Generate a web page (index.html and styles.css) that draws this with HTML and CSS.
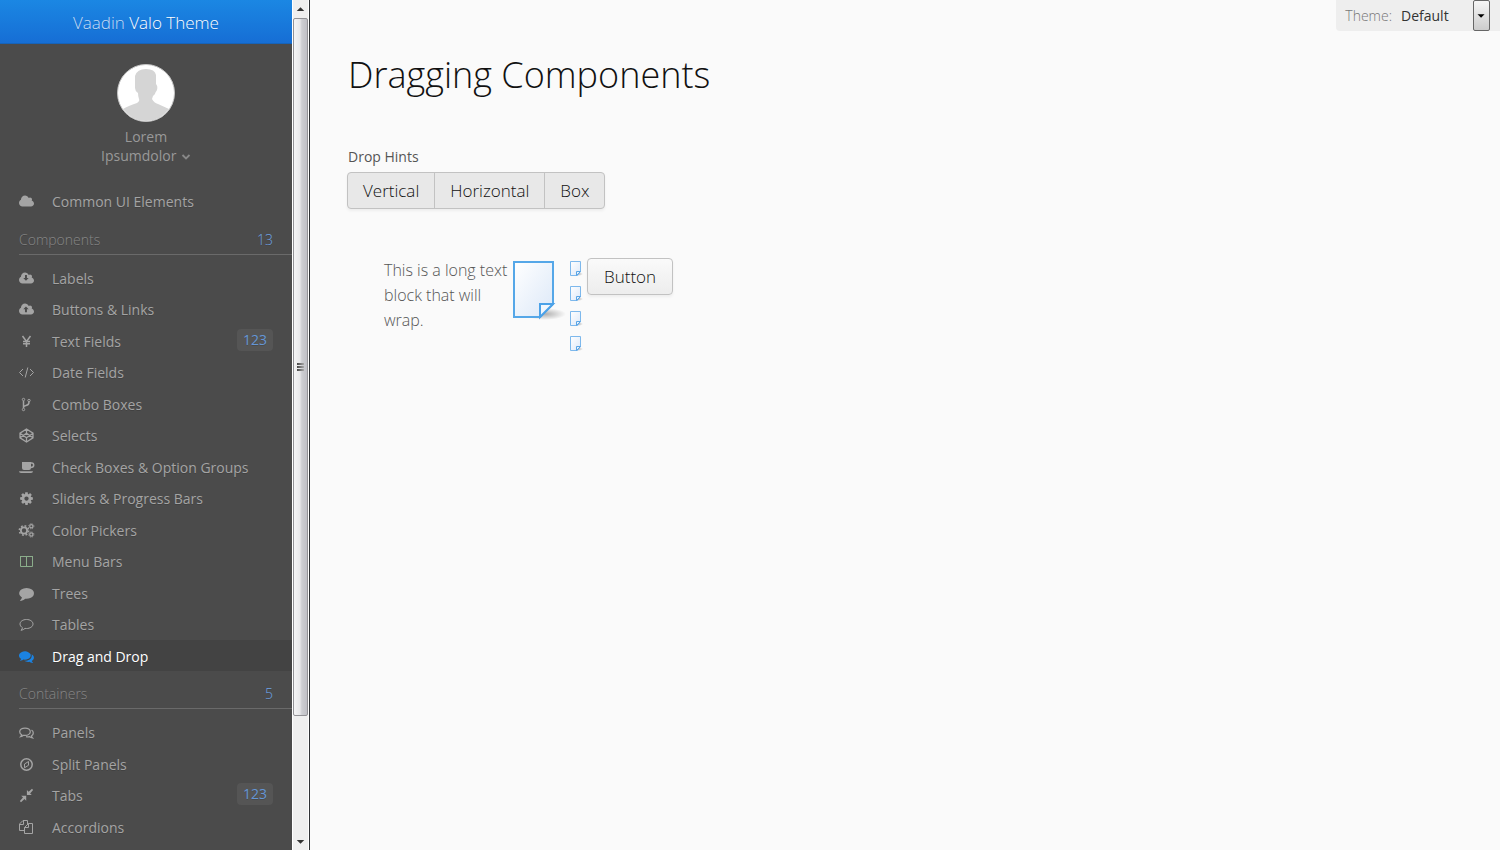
FILE: index.html
```html
<!DOCTYPE html>
<html lang="en">
<head>
<meta charset="utf-8">
<title>Vaadin Valo Theme</title>
<link rel="stylesheet" href="styles.css">
</head>
<body>
<svg class="defs" aria-hidden="true">
  <defs>
    <linearGradient id="paper" x1="0" y1="0" x2="1" y2="1"><stop offset="0" stop-color="#ffffff"/><stop offset="1" stop-color="#dce8f8"/></linearGradient>
    <radialGradient id="shade"><stop offset="0" stop-color="#000" stop-opacity=".3"/><stop offset="1" stop-color="#000" stop-opacity="0"/></radialGradient>
    <path id="cloud" d="M1984 1152q0 159-112.5 271.5t-271.5 112.5h-1088q-185 0-316.5-131.5t-131.5-316.5q0-132 71-241.5t187-163.5q-2-28-2-43 0-212 150-362t362-150q158 0 286.5 88t187.5 230q70-62 166-62 106 0 181 75t75 181q0 75-41 138 129 30 213 134.5t84 239.5z"/>
    <symbol id="note" viewBox="0 0 14 17">
      <ellipse cx="9" cy="14" rx="5" ry="2" fill="url(#shade)"/>
      <path d="M1.500 1.500h10v10l-3 4h-7z" fill="url(#paper)" stroke="#7db8ec"/>
      <path d="M11.500 11.500h-4v4z" fill="#e8f2fc" stroke="#5aa5e6"/>
    </symbol>
  </defs>
</svg>
<div class="app">
  <aside class="sidebar">
    <div class="menu">
      <header class="brand">Vaadin <strong>Valo Theme</strong></header>
      <button class="user" type="button">
        <svg class="avatar" viewBox="0 0 58 58"><circle cx="29" cy="29" r="28.500" fill="#fff"/><path d="M6 45q5-3 14-6 3-2 2-4-1-3-1-6-3-2-3-5V12q2-7 11-7t10 6v9q2 2 1 6-2 3-2 4-3 2-3 5 2 4 6 5l11 5q-9 12-23 12T6 45z" fill="#d5d5d5"/><circle cx="29" cy="29" r="28.500" fill="none" stroke="#c4c4c4"/></svg>
        <span>Lorem</span>
        <span>Ipsumdolor <svg class="chevron" viewBox="0 0 10 8"><path d="M1.500 2l3.500 3.500L8.500 2" fill="none" stroke="#888" stroke-width="1.800"/></svg></span>
      </button>
      <nav>
        <ul class="items late">
          <li><a href="#common"><svg viewBox="-64 -32 2176 2176"><use href="#cloud" y="160"/></svg>Common UI Elements</a></li>
        </ul>
        <h2>Components <span>13</span></h2>
        <ul class="items">
          <li><a href="#labels"><svg viewBox="-64 -32 2176 2176"><use href="#cloud" y="160"/><path d="M830 620h250v370h220l-345 350-345-350h220z" class="cut"/></svg>Labels</a></li>
          <li><a href="#buttons"><svg viewBox="-64 -32 2176 2176"><use href="#cloud" y="160"/><path d="M830 1400h250v-370h220L955 680 610 1030h220z" class="cut"/></svg>Buttons &amp; Links</a></li>
          <li><a href="#text"><svg viewBox="0 0 17 17"><path d="M4.500 3l4 5.500 4-5.500M8.500 8v6M5 8.500h7M5 10.800h7" class="line thick"/></svg>Text Fields<span class="badge">123</span></a></li>
          <li><a href="#date"><svg viewBox="0 0 17 17"><path d="M5 5L1.500 8.500 5 12M12 5l3.500 3.500L12 12M9.800 3.500l-2.600 10" class="line"/></svg>Date Fields</a></li>
          <li><a href="#combo"><svg viewBox="0 0 17 17"><g class="line"><circle cx="5.500" cy="3.500" r="1.200"/><circle cx="5.500" cy="13.500" r="1.200"/><circle cx="11" cy="4.500" r="1.200"/><path d="M5.500 5v7M11 6q0 3-3 3.500-2.500.5-2.500 2" stroke-width="1.500"/></g></svg>Combo Boxes</a></li>
          <li><a href="#selects"><svg viewBox="0 0 17 17"><path d="M8.500 2l6.500 4.200v4.600L8.500 15 2 10.800V6.200zM8.500 2v4.200M8.500 10.800V15M2 6.200l6.500 4.600L15 6.200M2 10.800l6.500-4.600 6.500 4.600" class="line medium"/></svg>Selects</a></li>
          <li><a href="#check"><svg viewBox="0 0 17 17"><path d="M4 3h9v6q0 2-2 2H6q-2 0-2-2zM1 12.300h14q0 1.700-2 1.700H3q-2 0-2-1.700z"/><path d="M12.500 4h1.200q2 0 2 2.200t-3.200 2.300" class="line thick"/></svg>Check Boxes &amp; Option Groups</a></li>
          <li><a href="#sliders"><svg viewBox="-128 -128 2048 2048"><path d="M1152 896q0-106-75-181t-181-75-181 75-75 181 75 181 181 75 181-75 75-181zm512-109v222q0 12-8 23t-20 13l-185 28q-19 54-39 91 35 50 107 138 10 12 10 25t-9 23q-27 37-99 108t-94 71q-12 0-26-9l-138-108q-44 23-91 38-16 136-29 186-7 28-36 28h-222q-14 0-24.500-8.500t-11.500-21.500l-28-184q-49-16-90-37l-141 107q-10 9-25 9-14 0-25-11-126-114-165-168-7-10-7-23 0-12 8-23 15-21 51-66.500t54-70.500q-27-50-41-99l-183-27q-13-2-21-12.500t-8-23.500v-222q0-12 8-23t19-13l186-28q14-46 39-92-40-57-107-138-10-12-10-24 0-10 9-23 26-36 98.500-107.500t94.500-71.500q13 0 26 10l138 107q44-23 91-38 16-136 29-186 7-28 36-28h222q14 0 24.500 8.500t11.500 21.500l28 184q49 16 90 37l142-107q9-9 24-9 13 0 25 10 129 119 165 170 7 8 7 22 0 12-8 23-15 21-51 66.500t-54 70.500q26 50 41 98l183 28q13 2 21 12.500t8 23.500z"/></svg>Sliders &amp; Progress Bars</a></li>
          <li><a href="#color"><svg viewBox="0 0 17 17"><g class="line"><circle cx="6" cy="8.500" r="3.100" stroke-width="1.800"/><circle cx="6" cy="8.500" r="4.700" stroke-width="1.500" stroke-dasharray="1.850 1.840"/><circle cx="13.300" cy="4.300" r="1.600" stroke-width="1.200"/><circle cx="13.300" cy="4.300" r="2.600" stroke-dasharray="1 1.040"/><circle cx="13.300" cy="12.500" r="1.600" stroke-width="1.200"/><circle cx="13.300" cy="12.500" r="2.600" stroke-dasharray="1 1.040"/></g></svg>Color Pickers</a></li>
          <li><a href="#menu"><svg viewBox="0 0 17 17"><path d="M2.500 3.500h12v10h-12zM8.500 3v11M2 3.500h13" class="line green"/></svg>Menu Bars</a></li>
          <li><a href="#trees"><svg viewBox="-128 -128 2048 2048"><path d="M1792 896q0 174-120 321.500t-326 233-450 85.500q-70 0-145-8-198 175-460 242-49 14-114 22-40 0-48-38-3-20 12-49 90-100 124-150 50-80 85-186-157-89-247.500-220T13 869q0-130 71-248.500t191-204.500 286-136.500 348-50.500 348 50.500 286 136.500 191 204.500 58 275z"/></svg>Trees</a></li>
          <li><a href="#tables"><svg viewBox="0 0 17 17"><path d="M8.500 3.500c3.600 0 6.500 1.900 6.500 4.500s-2.900 4.500-6.500 4.500l-1.500-.1q-1.700 1.600-4 1.900 1.200-1.200 1.500-2.600C3 10.900 2 9.500 2 8c0-2.600 2.900-4.500 6.500-4.500z" class="line"/></svg>Tables</a></li>
          <li><a href="#drag" class="selected" aria-current="page"><svg viewBox="-128 -128 2048 2048"><path d="M1408 768q0 139-94 257t-256.500 186.500-353.500 68.500q-86 0-176-16-124 88-278 128-36 9-86 16-28 0-35-29-2-20 30-54 70-75 97-141-124-72-195-177T-10 783q0-139 94-257t256.500-186.500T704 256t353.500 83.500 256.500 186.500 94 242zm384 256q0 120-71 224.500t-195 176.500q40 90 117 166 25 30 18 54-10 30-35 29-50-7-86-16-154-40-278-128-90 16-176 16-271 0-472-132 58 4 88 4 161 0 309-45t264-129q125-92 192-212t67-254q0-77-23-152 129 71 204 178t75 230z"/></svg>Drag and Drop</a></li>
        </ul>
        <h2>Containers <span>5</span></h2>
        <ul class="items late">
          <li><a href="#panels"><svg viewBox="0 0 17 17"><path d="M7 4c3 0 5.300 1.600 5.300 3.700S10 11.400 7 11.400l-1.500-.1q-1.300 1-2.800 1.300.8-.8 1-1.900Q1.700 9.600 1.700 7.700C1.700 5.600 4 4 7 4zM13.500 6q1.800 1 1.800 3 0 1.800-1.900 3 .3 1.100 1.100 1.900-1.700-.2-2.900-1.300-1.800.4-3.600 0" class="line medium"/></svg>Panels</a></li>
          <li><a href="#split"><svg viewBox="0 0 17 17"><circle cx="8.500" cy="8.500" r="5.700" class="line thick"/><path d="M6.500 8l4-2.500v3.800l-4 2.500z" class="line"/></svg>Split Panels</a></li>
          <li><a href="#tabs"><svg viewBox="0 0 17 17"><path d="M8.200 8.800v5L6.500 12.100 3 15.200 1.900 14.100 5 10.500 3.200 8.800zM8.900 8.100v-5l1.700 1.700L14 1.800l1.100 1.100-3 3.500 1.700 1.700z"/></svg>Tabs<span class="badge">123</span></a></li>
          <li><a href="#accordions"><svg viewBox="0 0 17 17"><path d="M6.500 11.500h-5V5L5 1.500h4.500V5M5.500 1.500v4h-4M6.500 8.500l4-4h4v10h-8zM10.500 4.500v4h-4" class="line"/></svg>Accordions</a></li>
        </ul>
      </nav>
    </div>
    <div class="scrollbar" aria-hidden="true">
      <svg class="arrow" viewBox="0 0 16 18"><path d="M4 11l4-4 4 4z"/></svg>
      <div class="thumb"><i></i><i></i><i></i></div>
      <div class="track"></div>
      <svg class="arrow" viewBox="0 0 16 18"><path d="M4 8l4 4 4-4z"/></svg>
    </div>
  </aside>
  <main>
    <div class="theme">
      <label for="theme">Theme:</label>
      <div class="picker">
        <select id="theme"><option>Default</option></select>
        <svg class="drop" viewBox="0 0 17 31"><path d="M4 14h8l-4 4z"/></svg>
      </div>
    </div>
    <h1>Dragging Components</h1>
    <p class="caption" id="hints">Drop Hints</p>
    <div class="segments" role="group" aria-labelledby="hints">
      <button type="button">Vertical</button><button type="button">Horizontal</button><button type="button">Box</button>
    </div>
    <div class="draggables">
      <p>This is a long text block that will wrap.</p>
      <svg class="document" viewBox="0 0 54 62">
        <ellipse cx="33" cy="56" rx="21" ry="6" fill="url(#shade)"/>
        <path d="M2 4h39v42L28 59H2z" fill="url(#paper)" stroke="#55a7e8" stroke-width="2"/>
        <path d="M41 46H28v13z" fill="#f2f7fd" stroke="#4ca2e8" stroke-width="2"/>
      </svg>
      <div class="notes">
        <svg><use href="#note"/></svg><svg><use href="#note"/></svg><svg><use href="#note"/></svg><svg><use href="#note"/></svg>
      </div>
      <button class="button" type="button">Button</button>
    </div>
  </main>
</div>
</body>
</html>
```
FILE: styles.css
```css
* { box-sizing: border-box; }
body { margin: 0; background: #fafafa; color: #111; font: 300 16px/25px "Open Sans", sans-serif; }
button, select { font: inherit; color: inherit; }
.defs { position: absolute; width: 0; height: 0; }
.app { display: flex; height: 100vh; overflow: hidden; }

.sidebar { display: flex; flex: none; border-right: 1px solid #303336; }
.menu { width: 292px; overflow: hidden; background: #4b4b4b; color: #a4a4a4; font-size: 14px; text-shadow: 0 1px 0 rgba(0,0,0,.15); }
.brand { height: 44px; padding-top: 11px; text-align: center; font-size: 17px; line-height: 24px; color: #c4dcf6; background: linear-gradient(#1b87e3, #166ed5); border-bottom: 1px solid #1763b8; }
.brand strong { font-weight: 300; color: #fff; }
.user { display: flex; flex-direction: column; align-items: center; width: 100%; padding: 20px 0; border: 0; background: none; line-height: 19px; font-weight: 400; color: #999; }
.avatar { width: 58px; height: 58px; margin-bottom: 5px; }
.chevron { width: 10px; height: 8px; margin-left: 1px; }
.items { margin: 0; padding: 0; list-style: none; font-weight: 400; }
.items li { position: relative; height: 31px; }
.items li:nth-child(even) { height: 32px; }
.items.late li:nth-child(odd) { height: 32px; }
.items.late li:nth-child(even) { height: 31px; }
.items a { display: flex; align-items: center; height: 100%; padding: 1px 19px 0 18px; color: inherit; text-decoration: none; }
.items svg { width: 17px; height: 17px; margin-right: 17px; fill: currentColor; }
.items .line { fill: none; stroke: currentColor; }
.items .medium { stroke-width: 1.250; }
.items .thick { stroke-width: 1.500; }
.items .green { stroke: #8bad8b; }
.items .cut { fill: #4b4b4b; }
.items .selected { background: #434343; color: #fff; }
.selected svg { color: #1b83e2; }
.badge { position: absolute; top: 4px; right: 19px; width: 36px; height: 22px; border-radius: 4px; background: #555; color: #6496d6; text-align: center; line-height: 22px; }
.menu h2 { display: flex; justify-content: space-between; margin: 6px 0 7px 19px; padding: 4px 19px 2px 0; border-bottom: 1px solid #6a6a6a; font-size: 14px; font-weight: 300; color: #868686; }
.menu h2 span { color: #6ea3e6; }

.scrollbar { display: flex; flex-direction: column; width: 17px; background: #efefef; border: solid #fff; border-width: 0 1px; }
.arrow { flex: none; height: 18px; fill: #333; }
.thumb { display: flex; flex: 6 1 0; flex-direction: column; align-items: center; justify-content: center; gap: 1px; border: 1px solid #929296; border-radius: 2px; background: linear-gradient(90deg, #f4f4f5, #e8e8ea 45%, #cdced2 60%, #c0c0c6); }
.thumb i { width: 7px; height: 2px; background: linear-gradient(90deg, #444, #aaa); }
.track { flex: 1 1 0; }

main { position: relative; flex: 1; padding: 50px 38px; }
h1 { margin: 0 0 44px; font-size: 36px; line-height: 50px; font-weight: 300; }
.theme { position: absolute; top: 0; right: 0; display: flex; align-items: center; height: 31px; padding: 0 10px 0 9px; border-radius: 0 0 0 4px; background: #eee; font-size: 14px; color: #777; }
.picker { position: relative; height: 31px; margin-left: 9px; color: #333; font-weight: 400; }
.picker select { width: 89px; height: 31px; padding: 0; border: 0; background: none; appearance: none; }
.drop { position: absolute; top: 0; right: 0; width: 17px; height: 31px; border: 1px solid #666; border-radius: 2px; background: linear-gradient(#f6f6f6, #ccc); pointer-events: none; }
.caption { margin: 0 0 3px; font-size: 14px; font-weight: 400; color: #555; }
.segments { display: inline-flex; margin-left: -1px; border: 1px solid #c2c2c2; border-radius: 4px; background: #e8e8e8; box-shadow: 0 2px 3px rgba(0,0,0,.05); }
.segments button { height: 35px; padding: 0 15px; border: 0; background: none; font-size: 17px; }
.segments button + button { border-left: 1px solid #c2c2c2; }
.draggables { display: flex; align-items: flex-start; margin: 49px 36px; }
.draggables p { width: 128px; margin: 0; color: #555; }
.document { width: 54px; height: 62px; }
.notes { display: flex; flex-direction: column; gap: 8px; margin: 2px 4px 0 3px; }
.notes svg { width: 14px; height: 17px; }
.button { height: 37px; padding: 0 16px; border: 1px solid #c2c2c2; border-radius: 4px; background: linear-gradient(#fafafa, #ededed); box-shadow: 0 2px 3px rgba(0,0,0,.05); font-size: 17px; }
```
